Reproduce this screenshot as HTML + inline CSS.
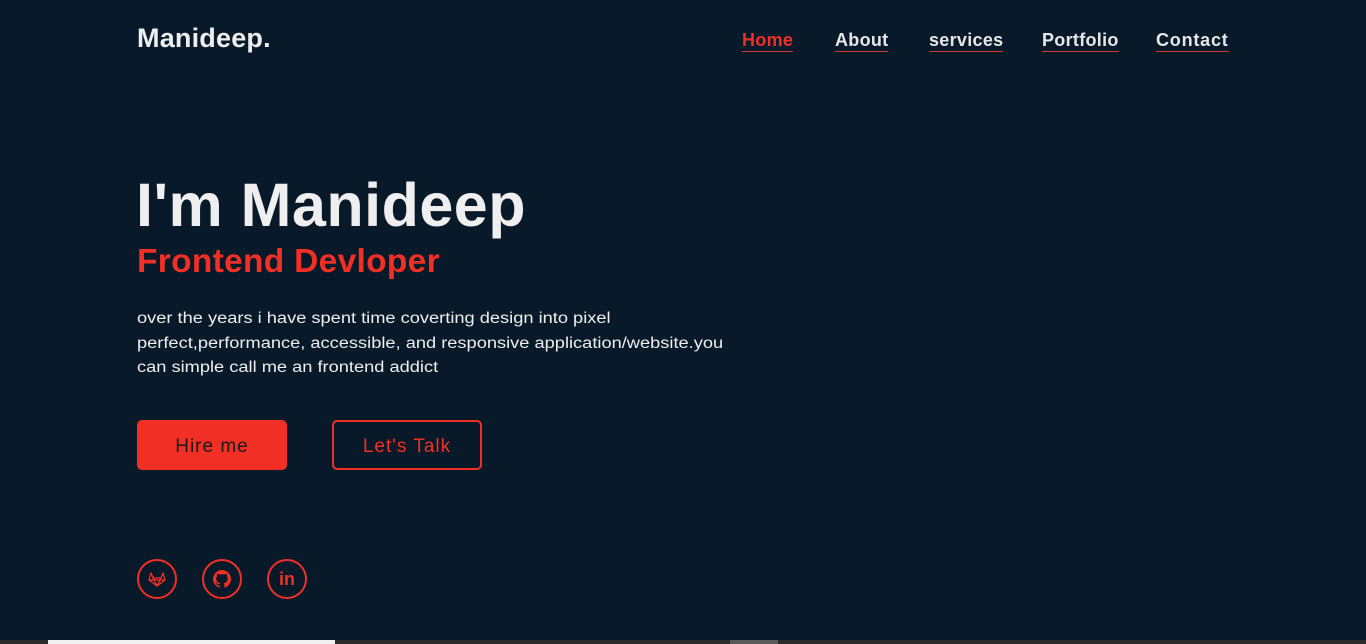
<!DOCTYPE html>
<html><head><meta charset="utf-8"><style>
*{margin:0;padding:0;box-sizing:border-box}
body{width:1366px;height:644px;background:#081a29;overflow:hidden;position:relative;font-family:"Liberation Sans",sans-serif;color:#eee}
.a{position:absolute;white-space:nowrap}
.logo{left:137px;top:23px;font-size:27px;font-weight:bold;color:#eee;letter-spacing:0.2px}
.nav a{position:absolute;top:30px;font-size:18px;font-weight:bold;color:#e6e6e6;text-decoration:none;border-bottom:1px solid #d63a2f;padding-bottom:1px;line-height:20px;letter-spacing:0.3px}
.p{left:137px;top:307px;font-size:15.5px;line-height:24.5px;color:#eee;transform:scaleX(1.177);transform-origin:0 0}
.btn{position:absolute;top:420px;width:150px;height:50px;border-radius:5px;font-size:19px;letter-spacing:1px;display:flex;align-items:center;justify-content:center;padding-top:3px}
.ic{position:absolute;top:559px;width:40px;height:40px;border:2px solid #f22f24;border-radius:50%;display:flex;align-items:center;justify-content:center}
</style></head><body>
<div class="a logo">Manideep.</div>
<div class="nav">
<a style="left:742px;color:#f22f24">Home</a>
<a style="left:835px">About</a>
<a style="left:929px">services</a>
<a style="left:1042px">Portfolio</a>
<a style="left:1156px;letter-spacing:0.8px">Contact</a>
</div>
<div class="a" style="left:136px;top:170px;font-size:61px;font-weight:bold;color:#efefef;letter-spacing:0.5px">I'm Manideep</div>
<div class="a" style="left:137px;top:243px;font-size:33.5px;font-weight:bold;color:#f22f24;letter-spacing:0.3px">Frontend Devloper</div>
<div class="a p">over the years i have spent time coverting design into pixel<br>perfect,performance, accessible, and responsive application/website.you<br>can simple call me an frontend addict</div>
<div class="btn" style="left:137px;background:#f22f24;color:#1a1a1a">Hire me</div>
<div class="btn" style="left:332px;border:2px solid #f22f24;color:#f22f24">Let's Talk</div>
<div class="ic" style="left:137px"><svg width="18" height="16" viewBox="0 0 18 16" fill="none" stroke="#f22f24" stroke-width="1.3" stroke-linejoin="round"><path d="M9 15L1 9l2-7 2 5h8l2-5 2 7z M5 7l4 8 4-8 M1 9h16"/></svg></div>
<div class="ic" style="left:202px"><svg width="18" height="18" viewBox="0 0 16 16" fill="#f22f24"><path d="M8 0C3.6 0 0 3.6 0 8c0 3.5 2.3 6.5 5.5 7.6.4.1.5-.2.5-.4v-1.4c-2.2.5-2.7-1-2.7-1-.4-.9-.9-1.2-.9-1.2-.7-.5.1-.5.1-.5.8.1 1.2.8 1.2.8.7 1.200 1.9.9 2.3.7.1-.5.3-.9.5-1.1-1.8-.2-3.6-.9-3.6-4 0-.9.3-1.6.8-2.1-.1-.2-.4-1 .1-2.1 0 0 .7-.2 2.2.8a7.5 7.5 0 014 0c1.5-1 2.2-.8 2.2-.8.4 1.1.2 1.9.1 2.1.5.6.8 1.3.8 2.1 0 3.1-1.9 3.8-3.6 4 .3.3.6.8.6 1.5v2.2c0 .2.1.5.6.4A8 8 0 0016 8c0-4.4-3.6-8-8-8z"/></svg></div>
<div class="ic" style="left:267px;color:#f22f24;font-weight:bold;font-size:18px">in</div>
<div style="position:absolute;left:0;top:640px;width:1366px;height:4px;background:#2b2b2b"></div>
<div style="position:absolute;left:48px;top:640px;width:287px;height:4px;background:#f0f0f0"></div>
<div style="position:absolute;left:730px;top:640px;width:48px;height:4px;background:#5a5a5a"></div>
</body></html>
